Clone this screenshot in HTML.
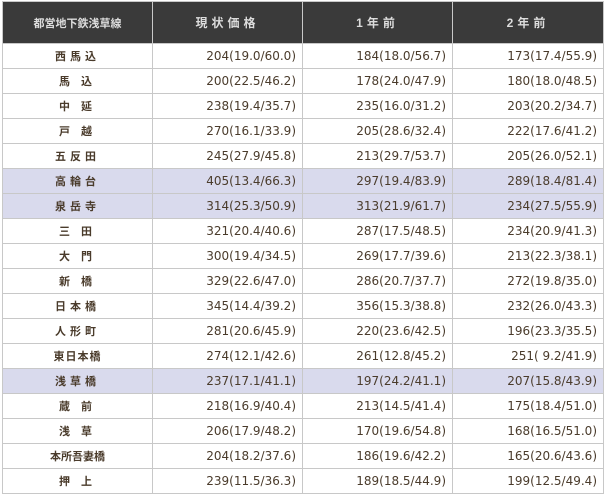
<!DOCTYPE html>
<html><head><meta charset="utf-8"><style>
body{margin:0;background:#fff;width:606px;height:496px;overflow:hidden;font-family:"Liberation Sans","Noto Sans CJK JP",sans-serif}
.g{position:absolute;left:2px;top:1px;padding:1px;background:#c8c8c8;display:grid;grid-template-columns:149px 149px 149px 150px;grid-template-rows:41px repeat(18,24px);gap:1px}
.g div{background:#fff;display:flex;align-items:center;color:#4a3b2b}
.h{background:#3a3a3a!important;color:#dcdcdc!important;justify-content:center;font-weight:bold;font-size:12px;letter-spacing:4px}
.h.f{letter-spacing:0;font-size:11px}
.n{justify-content:center;font-weight:bold;font-size:11px;letter-spacing:4px;white-space:pre}
.v{justify-content:flex-end;padding-right:6px;font-family:"DejaVu Sans",sans-serif;font-size:12px;white-space:pre}
.g div.s{background:#d9daed}
</style></head><body>
<div class="g">
<div class="h f">都営地下鉄浅草線</div><div class="h">現状価格</div><div class="h">1年前</div><div class="h">2年前</div>
<div class="n">西馬込</div><div class="v">204(19.0/60.0)</div><div class="v">184(18.0/56.7)</div><div class="v">173(17.4/55.9)</div>
<div class="n">馬 込</div><div class="v">200(22.5/46.2)</div><div class="v">178(24.0/47.9)</div><div class="v">180(18.0/48.5)</div>
<div class="n">中 延</div><div class="v">238(19.4/35.7)</div><div class="v">235(16.0/31.2)</div><div class="v">203(20.2/34.7)</div>
<div class="n">戸 越</div><div class="v">270(16.1/33.9)</div><div class="v">205(28.6/32.4)</div><div class="v">222(17.6/41.2)</div>
<div class="n">五反田</div><div class="v">245(27.9/45.8)</div><div class="v">213(29.7/53.7)</div><div class="v">205(26.0/52.1)</div>
<div class="n s">高輪台</div><div class="v s">405(13.4/66.3)</div><div class="v s">297(19.4/83.9)</div><div class="v s">289(18.4/81.4)</div>
<div class="n s">泉岳寺</div><div class="v s">314(25.3/50.9)</div><div class="v s">313(21.9/61.7)</div><div class="v s">234(27.5/55.9)</div>
<div class="n">三 田</div><div class="v">321(20.4/40.6)</div><div class="v">287(17.5/48.5)</div><div class="v">234(20.9/41.3)</div>
<div class="n">大 門</div><div class="v">300(19.4/34.5)</div><div class="v">269(17.7/39.6)</div><div class="v">213(22.3/38.1)</div>
<div class="n">新 橋</div><div class="v">329(22.6/47.0)</div><div class="v">286(20.7/37.7)</div><div class="v">272(19.8/35.0)</div>
<div class="n">日本橋</div><div class="v">345(14.4/39.2)</div><div class="v">356(15.3/38.8)</div><div class="v">232(26.0/43.3)</div>
<div class="n">人形町</div><div class="v">281(20.6/45.9)</div><div class="v">220(23.6/42.5)</div><div class="v">196(23.3/35.5)</div>
<div class="n" style="letter-spacing:1px">東日本橋</div><div class="v">274(12.1/42.6)</div><div class="v">261(12.8/45.2)</div><div class="v">251( 9.2/41.9)</div>
<div class="n s">浅草橋</div><div class="v s">237(17.1/41.1)</div><div class="v s">197(24.2/41.1)</div><div class="v s">207(15.8/43.9)</div>
<div class="n">蔵 前</div><div class="v">218(16.9/40.4)</div><div class="v">213(14.5/41.4)</div><div class="v">175(18.4/51.0)</div>
<div class="n">浅 草</div><div class="v">206(17.9/48.2)</div><div class="v">170(19.6/54.8)</div><div class="v">168(16.5/51.0)</div>
<div class="n" style="letter-spacing:0">本所吾妻橋</div><div class="v">204(18.2/37.6)</div><div class="v">186(19.6/42.2)</div><div class="v">165(20.6/43.6)</div>
<div class="n">押 上</div><div class="v">239(11.5/36.3)</div><div class="v">189(18.5/44.9)</div><div class="v">199(12.5/49.4)</div>
</div>
</body></html>
